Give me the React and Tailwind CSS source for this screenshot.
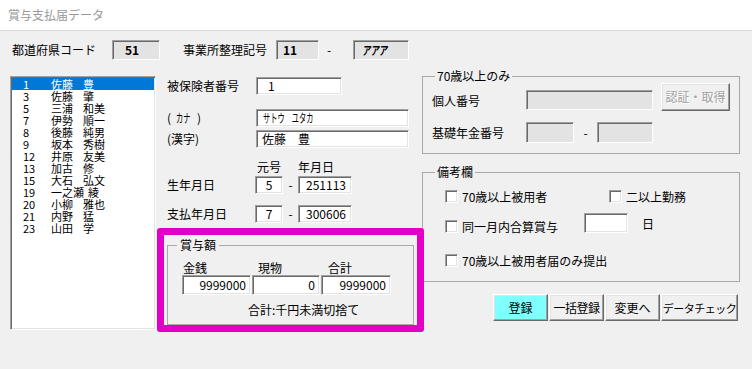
import React from 'react';

// Windows classic 3D edges
const SUNKEN =
  'border border-t-[#a0a0a0] border-l-[#a0a0a0] border-r-white border-b-white shadow-[inset_1px_1px_0_#696969,inset_-1px_-1px_0_#e3e3e3]';
const RAISED =
  'border border-t-white border-l-white border-r-[#696969] border-b-[#696969] shadow-[inset_-1px_-1px_0_#a0a0a0,inset_1px_1px_0_#e3e3e3]';

const employees = [
  ['1', '佐藤', '豊'],
  ['3', '佐藤', '肇'],
  ['5', '三浦', '和美'],
  ['7', '伊勢', '順一'],
  ['8', '後藤', '純男'],
  ['9', '坂本', '秀樹'],
  ['12', '井原', '友美'],
  ['13', '加古', '修'],
  ['15', '大石', '弘文'],
  ['19', '一之瀬', '綾'],
  ['20', '小柳', '雅也'],
  ['21', '内野', '猛'],
  ['23', '山田', '学'],
];

function Box({ className = '', children }) {
  return <div className={`${SUNKEN} flex items-center ${className}`}>{children}</div>;
}

function Check() {
  return <div className={`${SUNKEN} h-[13px] w-[13px] shrink-0 bg-white`} />;
}

function Button({ className = '', children }) {
  return (
    <div className={`${RAISED} flex h-[27px] items-center justify-center whitespace-nowrap ${className}`}>
      {children}
    </div>
  );
}

function Group({ title, className = '', children }) {
  return (
    <fieldset className={`border border-[#a9a9a9] ${className}`}>
      <legend className="ml-[12px] h-[14px] px-[2px] leading-[14px]">{title}</legend>
      {children}
    </fieldset>
  );
}

// half-width kana look: full-width glyphs squeezed
function Narrow({ className = 'scale-x-[0.6]', children }) {
  return <span className={`inline-block origin-left whitespace-pre ${className}`}>{children}</span>;
}

export default function App() {
  return (
    <div className="h-[369px] w-[752px] overflow-hidden bg-[#f0f0f0] font-['Noto_Sans_CJK_JP','Noto_Sans',sans-serif] text-[12px] leading-[12px] text-black">
      {/* title bar */}
      <div className="flex h-[31px] items-center border-b border-[#dadada] bg-white pl-[8px] text-[#999999]">
        賞与支払届データ
      </div>

      {/* office codes */}
      <div className="mt-[9px] flex h-[20px] items-center">
        <span className="ml-[12px] w-[100px]">都道府県コード</span>
        <Box className="h-[20px] w-[48px] bg-[#e3e3e3] pl-[12px] font-bold">51</Box>
        <span className="ml-[23px] w-[93px]">事業所整理記号</span>
        <Box className="h-[20px] w-[43px] bg-[#e3e3e3] pl-[6px] font-bold">11</Box>
        <span className="ml-[8px] w-[26px]">-</span>
        <Box className="h-[20px] w-[56px] overflow-hidden bg-[#e3e3e3] pl-[8px] font-bold italic">
          <Narrow className="scale-x-[0.7]">アアア</Narrow>
        </Box>
      </div>

      <div className="mt-[9px] flex">
        {/* employee list */}
        <div className={`${SUNKEN} ml-[10px] mt-[7px] h-[254px] w-[146px] bg-white pt-[1px] text-[11px]`}>
          {employees.map(([no, family, given], i) => (
            <div
              key={no}
              className={`mx-[1px] flex h-[12px] items-center pl-[11px] ${
                i === 0 ? 'bg-[#0078d7] text-white' : ''
              }`}
            >
              <span className="w-[28px]">{no}</span>
              <span className="min-w-[32px] pr-[4px]">{family}</span>
              <span>{given}</span>
            </div>
          ))}
        </div>

        {/* insured person */}
        <div className="ml-[1px] mt-[7px] w-[265px]">
          <div className="mt-[1px] flex h-[18px] items-center">
            <span className="ml-[10px] w-[89px]">被保険者番号</span>
            <Box className="h-[18px] w-[86px] bg-white pl-[11px]">1</Box>
          </div>
          <div className="mt-[14px] flex h-[18px] items-center">
            <span className="ml-[10px] flex w-[89px] items-center">
              <span>(</span>
              <span className="ml-[5px] w-[16px] overflow-visible">
                <Narrow>カナ</Narrow>
              </span>
              <span className="ml-[5px]">)</span>
            </span>
            <Box className="h-[18px] w-[153px] overflow-hidden bg-white pl-[6px]">
              <Narrow>サトウ　ユタカ</Narrow>
            </Box>
          </div>
          <div className="mt-[3px] flex h-[18px] items-center">
            <span className="ml-[10px] w-[89px]">(漢字)</span>
            <Box className="h-[18px] w-[153px] bg-white pl-[5px]">佐藤　豊</Box>
          </div>
          <div className="mt-[13px] flex h-[12px] items-center">
            <span className="ml-[100px] w-[41px]">元号</span>
            <span>年月日</span>
          </div>
          <div className="mt-[3px] flex h-[18px] items-center">
            <span className="ml-[10px] w-[88px]">生年月日</span>
            <Box className="h-[18px] w-[28px] justify-center bg-white">5</Box>
            <span className="w-[15px] text-center">-</span>
            <Box className="h-[18px] w-[54px] justify-end bg-white pr-[5px]">251113</Box>
          </div>
          <div className="mt-[11px] flex h-[18px] items-center">
            <span className="ml-[10px] w-[88px]">支払年月日</span>
            <Box className="h-[18px] w-[28px] justify-center bg-white">7</Box>
            <span className="w-[15px] text-center">-</span>
            <Box className="h-[18px] w-[54px] justify-end bg-white pr-[5px]">300606</Box>
          </div>

          {/* bonus amount, highlighted */}
          <div className="relative z-10 mt-[5px] h-[104px] w-[267px] rounded-[3px] border-[7px] border-[#e300c6] pt-[3px]">
            <fieldset className="ml-[3px] h-[87px] w-[247px] border border-[#a9a9a9]">
              <legend className="ml-[9px] h-[14px] px-[3px] leading-[14px]">賞与額</legend>
              <div className="mt-[10px] flex h-[12px] pl-[15px]">
                <span className="w-[75px]">金銭</span>
                <span className="w-[70px]">現物</span>
                <span>合計</span>
              </div>
              <div className="mt-[1px] flex gap-[1px] pl-[14px]">
                <Box className="h-[20px] w-[69px] justify-end bg-white pr-[4px]">9999000</Box>
                <Box className="h-[20px] w-[68px] justify-end bg-white pr-[4px]">0</Box>
                <Box className="h-[20px] w-[70px] justify-end bg-white pr-[4px]">9999000</Box>
              </div>
              <div className="mt-[9px] pl-[80px]">合計:千円未満切捨て</div>
            </fieldset>
          </div>
        </div>

        {/* right column */}
        <div className="w-[318px]">
          <Group title="70歳以上のみ" className="h-[85px]">
            <div className="flex items-start">
              <span className="ml-[9px] mt-[12px] w-[94px]">個人番号</span>
              <Box className="mt-[7px] h-[20px] w-[127px] bg-[#e3e3e3]" />
              <Button className="ml-[8px] h-[28px] w-[69px] text-[#a0a0a0] [text-shadow:1px_1px_0_#fff]">
                認証・取得
              </Button>
            </div>
            <div className="mt-[11px] flex h-[21px] items-center">
              <span className="ml-[9px] w-[94px]">基礎年金番号</span>
              <Box className="h-[21px] w-[48px] bg-[#e3e3e3]" />
              <span className="w-[23px] text-center">-</span>
              <Box className="h-[21px] w-[56px] bg-[#e3e3e3]" />
            </div>
          </Group>

          <Group title="備考欄" className="mt-[11px] h-[117px]">
            <div className="ml-[22px] mt-[11px] flex h-[13px] items-center">
              <div className="flex w-[164px] items-center">
                <Check />
                <span className="ml-[4px]">70歳以上被用者</span>
              </div>
              <Check />
              <span className="ml-[4px]">二以上勤務</span>
            </div>
            <div className="ml-[22px] mt-[10px] flex h-[20px] items-end">
              <div className="flex w-[139px] items-center">
                <Check />
                <span className="ml-[4px]">同一月内合算賞与</span>
              </div>
              <Box className="h-[20px] w-[44px] bg-white" />
              <span className="mb-[3px] ml-[14px]">日</span>
            </div>
            <div className="ml-[22px] mt-[21px] flex h-[13px] items-center">
              <Check />
              <span className="ml-[4px]">70歳以上被用者届のみ提出</span>
            </div>
          </Group>

          <div className="ml-[71px] mt-[12px] flex gap-[1px]">
            <Button className="w-[55px] bg-[#80ffff]">登録</Button>
            <Button className="w-[55px] tracking-[-0.5px]">一括登録</Button>
            <Button className="w-[55px]">変更へ</Button>
            <Button className="w-[77px] text-[11px] tracking-[-0.5px]">データチェック</Button>
          </div>
        </div>
      </div>
    </div>
  );
}
